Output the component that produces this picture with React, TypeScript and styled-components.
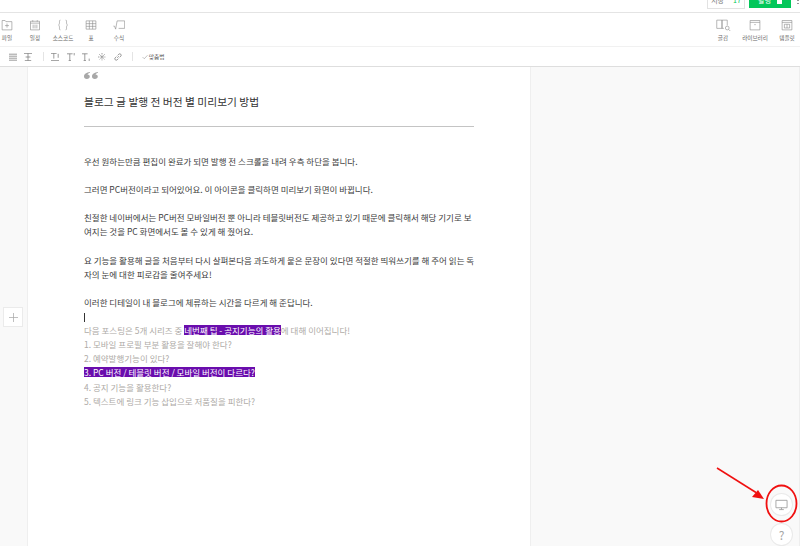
import React from 'react';
import styled, { createGlobalStyle } from 'styled-components';

const tools = [
  { label: '파일', icon: <path d="M1.500 2h4l1 1.500h8v11h-13zM8 6v5.500M5.300 8.800h5.400" /> },
  { label: '일정', icon: <path d="M2 3h12v11.500H2zM2 5.500h12M5 1.500v2M11 1.500v2M5.500 7.500v5M8 7.500v5M10.500 7.500v5" /> },
  { label: '소스코드', icon: <path d="M4.500 1.500c-1.500 0-1.200 1.500-1.200 3.500S2 8 2 8s1.300 1 1.300 3-.3 3.500 1.200 3.500M11.500 1.500c1.500 0 1.200 1.500 1.200 3.500S14 8 14 8s-1.300 1-1.300 3 .3 3.500-1.200 3.500" /> },
  { label: '표', icon: <path d="M1.500 2.500h13v11h-13zM1.500 6.200h13M1.500 9.800h13M5.800 2.500v11M10.200 2.500v11" /> },
  { label: '수식', icon: <path d="M.5 9.500h1.500l1.500 4L5.500 2.500h10v10h-8" /> },
];

const App: React.FC = () => {
  return (
    <Page>
      <GlobalStyle />
      <TopBar>
        <SaveButton>저장<SaveCount>17</SaveCount></SaveButton>
        <PublishButton>발행<PublishMark /></PublishButton>
        <TopMore />
      </TopBar>
      <ToolBar>
        <LeftTools>
          {tools.map((tool) => (
            <Tool key={tool.label}>
              <ToolIcon viewBox="0 0 16 16">{tool.icon}</ToolIcon>
              <ToolLabel>{tool.label}</ToolLabel>
            </Tool>
          ))}
        </LeftTools>
        <RightTools>
          <Tool>
            <WideToolIcon viewBox="0 0 20 16"><path d="M1 1.500h7v11H1zM8 1.500h7v7M8 1.500v11h2.500" /><circle cx="15" cy="12" r="2.500" /><path d="m17 14 2 2" /></WideToolIcon>
            <ToolLabel>글감</ToolLabel>
          </Tool>
          <Tool>
            <ToolIcon viewBox="0 0 16 16"><path d="M1.500 2h13v12.500h-13zM1.500 4.500h13M7 7.500h2" /></ToolIcon>
            <ToolLabel>라이브러리</ToolLabel>
          </Tool>
          <Tool>
            <ToolIcon viewBox="0 0 16 16"><path d="M1.500 2h13v12.500h-13zM1.500 4.500h13M4.500 7h7v5h-7zM8 7v5" /></ToolIcon>
            <ToolLabel>템플릿</ToolLabel>
          </Tool>
        </RightTools>
      </ToolBar>
      <FormatBar>
        <FormatIcon viewBox="0 0 10 10"><path d="M0 1.500h10M0 4h10M0 6.500h10M0 9h10" /></FormatIcon>
        <FormatIcon viewBox="0 0 10 10"><path d="M0 .5h10M5 .5v9M1 9.500h8M2 5h6" /></FormatIcon>
        <FormatDivider />
        <FormatIcon viewBox="0 0 10 10"><path d="M0 .5h7M3.500 .5v6.500M0 9.500h10M9 1v5" /></FormatIcon>
        <FormatIcon viewBox="0 0 10 10"><path d="M0 1h7M3.500 1v8.500M2 9.500h3M9 0v3" /></FormatIcon>
        <FormatIcon viewBox="0 0 10 10"><path d="M0 1h7M3.500 1v8.500M2 9.500h3M9 7v3" /></FormatIcon>
        <FormatIcon viewBox="0 0 10 10"><path d="M5 0v10M0 5h10M1.500 1.500l7 7M8.500 1.500l-7 7" strokeDasharray="1.200 .8" /></FormatIcon>
        <FormatIcon viewBox="0 0 10 10"><path d="M4 6l2-2M3 4.500 1.300 6.200a1.800 1.800 0 0 0 2.500 2.500L5.500 7M4.500 3l1.700-1.700a1.800 1.800 0 0 1 2.500 2.500L7 5.500" /></FormatIcon>
        <FormatDivider />
        <SpellCheck>
          <CheckIcon viewBox="0 0 12 12"><path d="m1 6 3.500 3.500L11 2.500" /></CheckIcon>
          맞춤법
        </SpellCheck>
      </FormatBar>
      <Workspace>
        <LeftGutter>
          <AddButton>
            <AddIcon viewBox="0 0 12 12"><path d="M6 0v12M0 6h12" /></AddIcon>
          </AddButton>
        </LeftGutter>
        <Paper>
          <QuoteIcon viewBox="0 0 14 7">
            <path d="M6 0C2.500.5 0 2 0 4.500 0 6 1 7 2.800 7S5.800 6 5.800 4.600 4.800 2.500 3.500 2.500C3.800 1.800 4.800 1 6 .8zM14 0c-3.500.5-6 2-6 4.500C8 6 9 7 10.800 7s3-1 3-2.400-1-2.100-2.300-2.100c.3-.7 1.300-1.500 2.500-1.700z" />
          </QuoteIcon>
          <Title>블로그 글 발행 전 버전 별 미리보기 방법</Title>
          <Rule />
          <Body>
            <Line>우선 원하는만큼 편집이 완료가 되면 발행 전 스크롤을 내려 우측 하단을 봅니다.</Line>
            <Blank />
            <Line>그러면 PC버전이라고 되어있어요. 이 아이콘을 클릭하면 미리보기 화면이 바뀝니다.</Line>
            <Blank />
            <Line>친절한 네이버에서는 PC버전 모바일버전 뿐 아니라 테블릿버전도 제공하고 있기 때문에 클릭해서 해당 기기로 보</Line>
            <Line>여지는 것을 PC 화면에서도 볼 수 있게 해 줬어요.</Line>
            <Blank />
            <Line>요 기능을 활용해 글을 처음부터 다시 살펴본다음 과도하게 뭍은 문장이 있다면 적절한 띄워쓰기를 해 주어 읽는 독</Line>
            <Line>자의 눈에 대한 피로감을 줄여주세요!</Line>
            <Blank />
            <Line>이러한 디테일이 내 블로그에 체류하는 시간을 다르게 해 준답니다.</Line>
            <Line><Caret /></Line>
            <MutedLine>다음 포스팅은 5개 시리즈 중 <Highlight>네번째 팁 - 공지기능의 활용</Highlight>에 대해 이어집니다!</MutedLine>
            <MutedLine>1. 모바일 프로필 부분 활용을 잘해야 한다?</MutedLine>
            <MutedLine>2. 예약발행기능이 있다?</MutedLine>
            <MutedLine><Highlight>3. PC 버전 / 테블릿 버전 / 모바일 버전이 다르다?</Highlight></MutedLine>
            <MutedLine>4. 공지 기능을 활용한다?</MutedLine>
            <MutedLine>5. 텍스트에 링크 기능 삽입으로 저품질을 피한다?</MutedLine>
          </Body>
        </Paper>
        <RightSide />
        <RoundButton $bottom={31}>
          <RoundIcon viewBox="0 0 14 14"><path d="M1 2.500h12v8H1zM7 10.500v1.800M4.500 12.500h5" /></RoundIcon>
        </RoundButton>
        <RoundButton $bottom={1}>
          <HelpMark>?</HelpMark>
        </RoundButton>
        <Annotation viewBox="0 0 90 90">
          <ellipse cx="65.500" cy="46.500" rx="15" ry="18" fill="none" stroke="#f01010" strokeWidth="1.800" />
          <path d="M1 11 40 35.500" stroke="#f01010" strokeWidth="1.500" />
          <path d="M48 42 36 40 42 33z" fill="#f01010" />
        </Annotation>
      </Workspace>
    </Page>
  );
};

const GlobalStyle = createGlobalStyle`
  html, body {
    margin: 0;
    padding: 0;
    background: #fff;
    overflow: hidden;
  }
  * {
    box-sizing: border-box;
  }
`;
const Page = styled.div`
  width: 800px;
  height: 546px;
  display: flex;
  flex-direction: column;
  font-family: "Noto Sans CJK KR", "Noto Sans", sans-serif;
  color: #333;
  overflow: hidden;
`;
const TopBar = styled.div`
  height: 13px;
  flex: none;
  display: flex;
  justify-content: flex-end;
  align-items: flex-start;
  gap: 4px;
  padding-right: 1px;
  border-bottom: 1px solid #e4e4e4;
`;
const SaveButton = styled.div`
  width: 38px;
  height: 9px;
  display: flex;
  align-items: flex-end;
  justify-content: center;
  gap: 9px;
  padding-bottom: 4px;
  border: 1px solid #e2e2e2;
  border-top: 0;
  font-size: 7px;
  line-height: 8px;
  color: #777;
  overflow: hidden;
`;
const SaveCount = styled.span`
  color: #03c75a;
`;
const PublishButton = styled.div`
  width: 42px;
  height: 8px;
  display: flex;
  align-items: flex-end;
  justify-content: center;
  gap: 6px;
  padding-bottom: 4px;
  background: #03c75a;
  color: #fff;
  font-size: 7px;
  line-height: 8px;
  overflow: hidden;
`;
const PublishMark = styled.span`
  width: 5px;
  height: 4px;
  background: #fff;
`;
const TopMore = styled.span`
  width: 2px;
  height: 4px;
  margin-left: 2px;
  border-top: 1px solid #999;
  border-bottom: 1px solid #999;
`;
const ToolBar = styled.div`
  height: 34px;
  flex: none;
  display: flex;
  justify-content: space-between;
  border-bottom: 1px solid #f1f1f1;
`;
const LeftTools = styled.div`
  display: flex;
  margin-left: -7px;
`;
const RightTools = styled.div`
  display: flex;
  margin-right: -3px;
`;
const Tool = styled.div`
  width: 28px;
  display: flex;
  flex-direction: column;
  align-items: center;
  padding-top: 6px;
  ${RightTools} & {
    width: 32px;
  }
`;
const ToolIcon = styled.svg`
  width: 12px;
  height: 12px;
  fill: none;
  stroke: #888;
  stroke-width: 0.8;
`;
const WideToolIcon = styled(ToolIcon)`
  width: 15px;
`;
const ToolLabel = styled.div`
  font-size: 5.6px;
  line-height: 9px;
  margin-top: 3px;
  color: #666;
  white-space: nowrap;
`;
const FormatBar = styled.div`
  height: 20px;
  flex: none;
  display: flex;
  align-items: center;
  gap: 7.6px;
  padding-left: 8.5px;
  border-bottom: 1px solid #dedede;
`;
const FormatIcon = styled.svg`
  width: 8px;
  height: 8px;
  fill: none;
  stroke: #777;
  stroke-width: 0.9;
`;
const FormatDivider = styled.span`
  width: 1px;
  height: 9px;
  margin-left: 3px;
  background: #e4e4e4;
`;
const SpellCheck = styled.div`
  display: flex;
  align-items: center;
  gap: 1px;
  margin-left: 1px;
  font-size: 5.7px;
  color: #555;
`;
const CheckIcon = styled.svg`
  width: 6px;
  height: 6px;
  fill: none;
  stroke: #888;
  stroke-width: 1;
`;
const Workspace = styled.div`
  position: relative;
  flex: 1;
  display: flex;
  min-height: 0;
`;
const LeftGutter = styled.div`
  width: 28px;
  flex: none;
  display: flex;
  justify-content: center;
  padding-top: 240px;
  padding-right: 1px;
  background: #f9f9f9;
  border-right: 1px solid #efefef;
`;
const AddButton = styled.div`
  width: 20px;
  height: 20px;
  display: flex;
  align-items: center;
  justify-content: center;
  background: #fff;
  border: 1px solid #ebebeb;
`;
const AddIcon = styled.svg`
  width: 9px;
  height: 9px;
  stroke: #aaa;
  stroke-width: 1;
`;
const Paper = styled.div`
  width: 503px;
  flex: none;
  padding: 5px 56px 0 56px;
  background: #fff;
  border-right: 1px solid #efefef;
`;
const QuoteIcon = styled.svg`
  display: block;
  width: 14px;
  height: 7px;
  fill: #a8a8a8;
`;
const Title = styled.div`
  margin-top: 14px;
  font-size: 10.750px;
  line-height: 18px;
  font-weight: 400;
  color: #333;
  white-space: nowrap;
`;
const Rule = styled.div`
  height: 1px;
  margin-top: 15px;
  background: #c4c4c4;
`;
const Body = styled.div`
  margin-top: 27px;
  font-size: 8.500px;
  color: #3c3c3c;
`;
const Line = styled.div`
  height: 14.100px;
  line-height: 14.100px;
  white-space: nowrap;
`;
const Blank = styled.div`
  height: 14.100px;
`;
const MutedLine = styled(Line)`
  color: #aeaaa6;
`;
const Highlight = styled.span`
  display: inline-block;
  vertical-align: top;
  margin-top: 2px;
  height: 10px;
  line-height: 10px;
  background: #6a0dad;
  color: #fff;
`;
const Caret = styled.span`
  display: inline-block;
  width: 1px;
  height: 9px;
  background: #333;
  vertical-align: middle;
`;
const RightSide = styled.div`
  flex: 1;
  background: #f9f9f9;
  border-right: 1px solid #eee;
`;
const RoundButton = styled.div<{ $bottom: number }>`
  position: absolute;
  right: 8px;
  bottom: ${({ $bottom }) => $bottom}px;
  width: 21px;
  height: 21px;
  border-radius: 50%;
  display: flex;
  align-items: center;
  justify-content: center;
  background: #fff;
  box-shadow: 0 0 0 1px #eaeaea;
`;
const RoundIcon = styled.svg`
  width: 13px;
  height: 13px;
  fill: none;
  stroke: #999;
  stroke-width: 0.9;
`;
const HelpMark = styled.span`
  font-size: 12px;
  line-height: 1;
  color: #a5a5a5;
`;
const Annotation = styled.svg`
  position: absolute;
  left: 716px;
  top: 390px;
  width: 90px;
  height: 90px;
  pointer-events: none;
`;

export default App;
